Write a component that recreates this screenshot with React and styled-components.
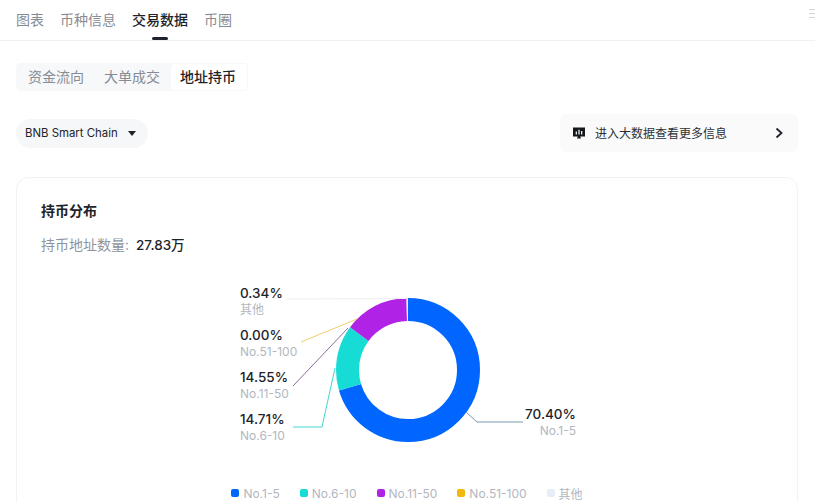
import React from "react";
import styled, { createGlobalStyle } from "styled-components";

const Global = createGlobalStyle`
  html, body { margin: 0; padding: 0; background: #fff; }
  body {
    width: 815px; height: 502px; overflow: hidden;
    font-family: Inter, "Noto Sans CJK SC", "Noto Sans", sans-serif;
    color: #1e2329;
  }
  * { box-sizing: border-box; }
`;

const Page = styled.div`width: 815px; height: 502px; overflow: hidden;`;
const TopBar = styled.nav`
  display: flex; height: 41px; padding-left: 16px; gap: 16px;
  border-bottom: 1px solid #eef0f2;
`;
const TopTab = styled.div`
  position: relative; height: 40px; line-height: 40px; font-size: 14px;
  font-weight: ${p => (p.$active ? 500 : 400)};
  color: ${p => (p.$active ? "#1e2329" : "#868c95")};
  ${p => p.$active && `
    &::after {
      content: ""; position: absolute; left: 20px; bottom: 0;
      width: 16px; height: 3px; border-radius: 2px; background: #1e2329;
    }
  `}
`;
const MenuGlyph = styled.div`
  margin-left: auto; width: 6px; padding-top: 9px;
  display: flex; flex-direction: column; gap: 3px;
  & > i { display: block; height: 1px; background: #d5d8dc; }
`;
const Content = styled.main`padding: 22px 17px 0 16px;`;
const Segments = styled.div`
  display: flex; width: fit-content; height: 28px; background: #f6f8fa; border-radius: 5px;
`;
const Segment = styled.div`
  display: flex; align-items: center; padding: 0 10px 2px ${p => (p.$first ? "12px" : "10px")};
  font-size: 14px; border-radius: 4px;
  font-weight: ${p => (p.$active ? 500 : 400)};
  color: ${p => (p.$active ? "#1e2329" : "#868c95")};
  background: ${p => (p.$active ? "#fff" : "transparent")};
  ${p => p.$active && "padding-right: 11px; border: 1px solid #f6f8fa; padding-left: 9px;"}
`;
const ControlRow = styled.div`
  margin-top: 23px; display: flex; align-items: center; justify-content: space-between;
`;
const ChainSelect = styled.div`
  width: 132px; height: 29px; padding: 0 11px 0 9px; border-radius: 15px;
  background: #f5f7f9; display: flex; align-items: center; justify-content: space-between;
  font-size: 11.4px; color: #1e2329;
`;
const Caret = styled.span`
  width: 0; height: 0; border-left: 4.5px solid transparent; border-right: 4.5px solid transparent;
  border-top: 5px solid #1e2329; margin-right: 1px;
`;
const DataLink = styled.div`
  width: 238px; height: 38px; padding: 0 13px; border-radius: 6px;
  background: #fafafa; display: flex; align-items: center; font-size: 12px; color: #2b3139;
`;
const LinkText = styled.span`margin-left: 10px; flex: 1; padding-bottom: 2px;`;
const Card = styled.section`
  margin-top: 25px; height: 400px; padding: 22px 24px; border: 1px solid #f1f2f4; border-radius: 12px;
`;
const CardTitle = styled.h3`margin: 0; font-size: 14px; line-height: 22px; font-weight: 600; color: #1e2329;`;
const CountRow = styled.div`
  margin-top: 12px; font-size: 14px; line-height: 22px; color: #8f949c;
  display: flex; gap: 7px;
`;
const CountValue = styled.span`color: #1e2329; font-weight: 500; font-size: 13.5px;`;
const ChartSvg = styled.svg`display: block; margin-top: 24px; width: 732px; height: 200px;`;
const Percent = styled.text`font-size: 13.5px; font-weight: 500; fill: #1e2329;`;
const RangeLabel = styled.text`font-size: 12px; fill: #b2b7bf;`;
const Legend = styled.div`
  margin-top: 3px; height: 20px; display: flex; justify-content: center; gap: 20px;
  font-size: 12px; color: #b2b7bf;
`;
const LegendItem = styled.div`display: flex; align-items: center; gap: 4px;`;
const Swatch = styled.i`
  display: block; width: 8px; height: 8px; border-radius: 2px; background: ${p => p.$color};
`;

const segs = [
  { v: 70.4, c: "#0066ff", n: "No.1-5" },
  { v: 14.71, c: "#17dcd6", n: "No.6-10" },
  { v: 14.55, c: "#b023e6", n: "No.11-50" },
  { v: 0, c: "#f0b90b", n: "No.51-100" },
  { v: 0.34, c: "#e6edf6", n: "其他" },
];
const leftLabels = [
  { p: "0.34%", n: "其他", y: 293 },
  { p: "0.00%", n: "No.51-100", y: 335 },
  { p: "14.55%", n: "No.11-50", y: 377 },
  { p: "14.71%", n: "No.6-10", y: 419 },
];
const leaders = [
  { pts: "287,299 406,298.5", c: "#eeeff1" },
  { pts: "301,342 357,319", c: "#f0cf6a" },
  { pts: "293,386 348,328", c: "#8d6a9e" },
  { pts: "293,427 322,427 335,368", c: "#3fd8d0" },
  { pts: "466,412 477,422 523,422", c: "#7d97b0" },
];

function Donut() {
  let acc = 0;
  return segs.map(s => {
    const el = (
      <circle key={s.n} cx="408" cy="370" r="60.5" fill="none" stroke={s.c} strokeWidth="23"
        pathLength="100" strokeDasharray={`${s.v} ${100 - s.v}`} strokeDashoffset={-acc}
        transform="rotate(-90 408 370)" />
    );
    acc += s.v;
    return el;
  });
}

export default function App() {
  return (
    <Page>
      <Global />
      <TopBar>
        <TopTab>图表</TopTab>
        <TopTab>币种信息</TopTab>
        <TopTab $active>交易数据</TopTab>
        <TopTab>币圈</TopTab>
        <MenuGlyph><i /><i /><i /></MenuGlyph>
      </TopBar>
      <Content>
        <Segments>
          <Segment $first>资金流向</Segment>
          <Segment>大单成交</Segment>
          <Segment $active>地址持币</Segment>
        </Segments>
        <ControlRow>
          <ChainSelect>BNB Smart Chain<Caret /></ChainSelect>
          <DataLink>
            <svg width="12" height="12" viewBox="0 0 12 12">
              <path d="M0 0.5h12v9H7.2L8 11.5H4L4.8 9.5H0z" fill="#14171c" />
              <path d="M3.3 4.5v3M6 2.8v4.7M8.7 4v3.5" stroke="#fff" strokeWidth="1.2" />
            </svg>
            <LinkText>进入大数据查看更多信息</LinkText>
            <svg width="10" height="12" viewBox="0 0 10 12" style={{ marginRight: 1 }}>
              <path d="M2.5 1.5 7.5 6l-5 4.5" fill="none" stroke="#1e2329" strokeWidth="1.8" />
            </svg>
          </DataLink>
        </ControlRow>
        <Card>
          <CardTitle>持币分布</CardTitle>
          <CountRow>持币地址数量:<CountValue>27.83万</CountValue></CountRow>
          <ChartSvg viewBox="41 280 732 200">
            <Donut />
            {leaders.map(l => (
              <polyline key={l.pts} points={l.pts} fill="none" stroke={l.c} strokeWidth="1" />
            ))}
            {leftLabels.map(l => (
              <g key={l.p}>
                <Percent x="240" y={l.y + 5}>{l.p}</Percent>
                <RangeLabel x="240" y={l.y + 21}>{l.n}</RangeLabel>
              </g>
            ))}
            <Percent x="576" y="419" textAnchor="end">70.40%</Percent>
            <RangeLabel x="576" y="435" textAnchor="end">No.1-5</RangeLabel>
          </ChartSvg>
          <Legend>
            {segs.map(s => (
              <LegendItem key={s.n}><Swatch $color={s.c} />{s.n}</LegendItem>
            ))}
          </Legend>
        </Card>
      </Content>
    </Page>
  );
}
